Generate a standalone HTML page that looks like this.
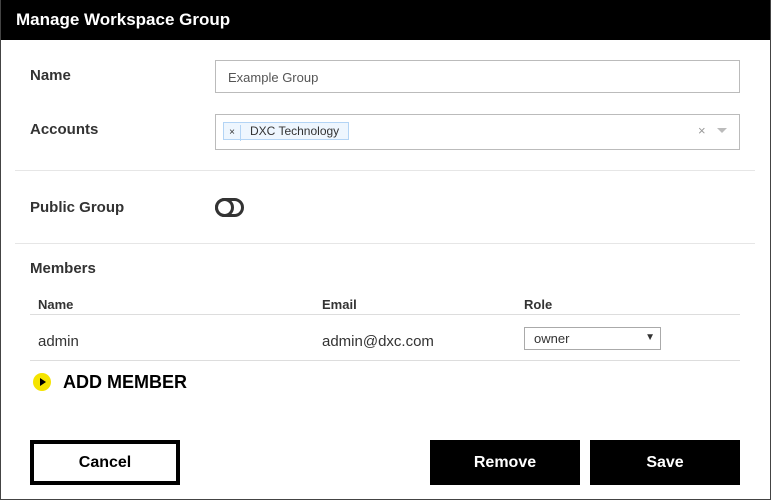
<!DOCTYPE html>
<html><head><style>
*{box-sizing:border-box;margin:0;padding:0}
body{width:771px;height:500px;background:#fff;font-family:"Liberation Sans",sans-serif;position:relative;overflow:hidden;color:#333}
.frame{position:absolute;left:0;top:0;width:771px;height:500px;border:1px solid #444;border-top:none}
.hdr{position:absolute;left:0;top:0;width:771px;height:40px;background:#000;color:#fff;font-weight:bold;font-size:17px;padding:10px 0 0 16px}
.a{position:absolute;white-space:nowrap}
.lbl{font-size:15px;font-weight:bold;color:#333}
.hr{position:absolute;height:1px;background:#e6e6e6}
.btn{position:absolute;top:440px;height:45px;background:#000;color:#fff;font-weight:bold;font-size:16px;text-align:center;line-height:45px}
</style></head><body>
<div class="hdr">Manage Workspace Group</div>
<div class="frame"></div>
<div class="a lbl" style="left:30px;top:67px">Name</div>
<div class="a" style="left:215px;top:60px;width:525px;height:33px;border:1px solid #bbb;font-size:13px;color:#555;padding:9px 0 0 12px">Example Group</div>
<div class="a lbl" style="left:30px;top:121px">Accounts</div>
<div class="a" style="left:215px;top:114px;width:525px;height:36px;border:1px solid #bbb"></div>
<div class="a" style="left:223px;top:122px;width:126px;height:18px;border:1px solid #b3d4f5;background:#eef6fe;font-size:12px;color:#333"><span style="display:inline-block;width:17px;border-right:1px solid #b3d4f5;text-align:center;font-size:10px;line-height:16px">×</span><span style="padding-left:9px;line-height:16px">DXC Technology</span></div>
<div class="a" style="left:698px;top:123px;font-size:13px;color:#999">×</div>
<div class="a" style="left:717px;top:128px;width:0;height:0;border-left:5px solid transparent;border-right:5px solid transparent;border-top:5px solid #bbb"></div>
<div class="hr" style="left:15px;top:170px;width:740px"></div>
<div class="a lbl" style="left:30px;top:199px">Public Group</div>
<div class="a" style="left:215px;top:198px;width:29px;height:19px;border:3px solid #333;border-radius:10px"></div>
<div class="a" style="left:215px;top:198px;width:19px;height:19px;border:3px solid #333;border-radius:50%"></div>
<div class="hr" style="left:15px;top:243px;width:740px"></div>
<div class="a lbl" style="left:30px;top:260px">Members</div>
<div class="a" style="left:38px;top:297px;font-size:13px;font-weight:bold;color:#333">Name</div>
<div class="a" style="left:322px;top:297px;font-size:13px;font-weight:bold;color:#333">Email</div>
<div class="a" style="left:524px;top:297px;font-size:13px;font-weight:bold;color:#333">Role</div>
<div class="hr" style="left:30px;top:314px;width:710px;background:#ddd"></div>
<div class="a" style="left:38px;top:333px;font-size:15px;color:#333">admin</div>
<div class="a" style="left:322px;top:333px;font-size:15px;color:#333">admin@dxc.com</div>
<div class="a" style="left:524px;top:327px;width:137px;height:23px;border:1px solid #aaa;font-size:13px;padding:3px 0 0 9px;color:#333">owner<span style="position:absolute;right:5px;top:4px;font-size:10px">▼</span></div>
<div class="hr" style="left:30px;top:360px;width:710px;background:#ddd"></div>
<div class="a" style="left:33px;top:373px;width:18px;height:18px;border-radius:50%;background:#f5e400"></div>
<div class="a" style="left:40px;top:378px;width:0;height:0;border-top:4px solid transparent;border-bottom:4px solid transparent;border-left:6px solid #000"></div>
<div class="a" style="left:63px;top:372px;font-size:18px;font-weight:bold;color:#000">ADD MEMBER</div>
<div class="a" style="left:30px;top:440px;width:150px;height:45px;border:4px solid #000;font-weight:bold;font-size:16px;text-align:center;line-height:37px;color:#000">Cancel</div>
<div class="btn" style="left:430px;width:150px">Remove</div>
<div class="btn" style="left:590px;width:150px">Save</div>
</body></html>
